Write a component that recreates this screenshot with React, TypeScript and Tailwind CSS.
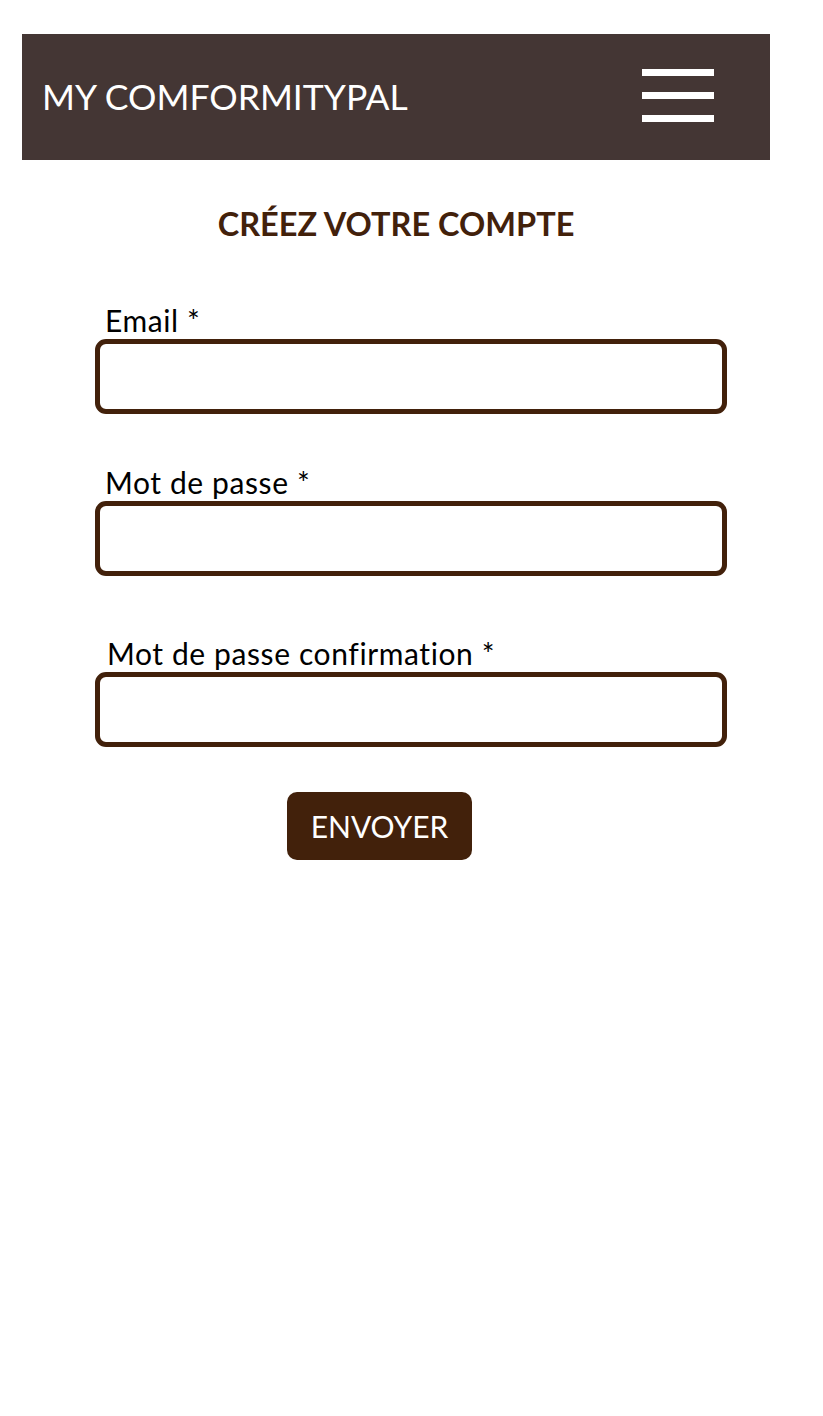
const fields = [
  { label: 'Email *', type: 'email', top: 'mt-[63px]', indent: 'pl-[10px]' },
  { label: 'Mot de passe *', type: 'password', top: 'mt-[53px]', indent: 'pl-[10px]' },
  { label: 'Mot de passe confirmation *', type: 'password', top: 'mt-[62px]', indent: 'pl-[12px]' },
];

export default function App() {
  return (
    <div className="min-h-[1416px] bg-white font-['Lato','Open_Sans',sans-serif]">
      <div className="ml-[22px] w-[748px] pt-[34px]">
        <header className="flex h-[126px] items-center justify-between bg-[#443634] pl-[20px] pr-[56px]">
          <h1 className="text-[35.5px] font-normal leading-none text-white">MY COMFORMITYPAL</h1>
          <button className="mb-[4px] flex w-[72px] flex-col gap-[16px]" aria-label="Menu">
            <span className="block h-[7px] w-full bg-white" />
            <span className="block h-[7px] w-full bg-white" />
            <span className="block h-[7px] w-full bg-white" />
          </button>
        </header>

        <h2 className="mt-[46px] text-center text-[32.5px] font-bold leading-[36px] text-[#42210b]">
          CRÉEZ VOTRE COMPTE
        </h2>

        <form className="ml-[73px] w-[632px]">
          {fields.map((f) => (
            <div key={f.label} className={f.top}>
              <label className={`block text-[30px] leading-[30px] tracking-[0.02em] text-black ${f.indent}`}>
                {f.label}
              </label>
              <input
                type={f.type}
                className="mt-[4px] block h-[75px] w-full rounded-[11px] border-[5px] border-[#42210b] bg-white outline-none"
              />
            </div>
          ))}
          <div className="mt-[45px] pl-[192px]">
            <button
              type="button"
              className="h-[68px] w-[185px] rounded-[10px] bg-[#42210b] text-[30px] leading-none text-white"
            >
              ENVOYER
            </button>
          </div>
        </form>
      </div>
    </div>
  );
}
